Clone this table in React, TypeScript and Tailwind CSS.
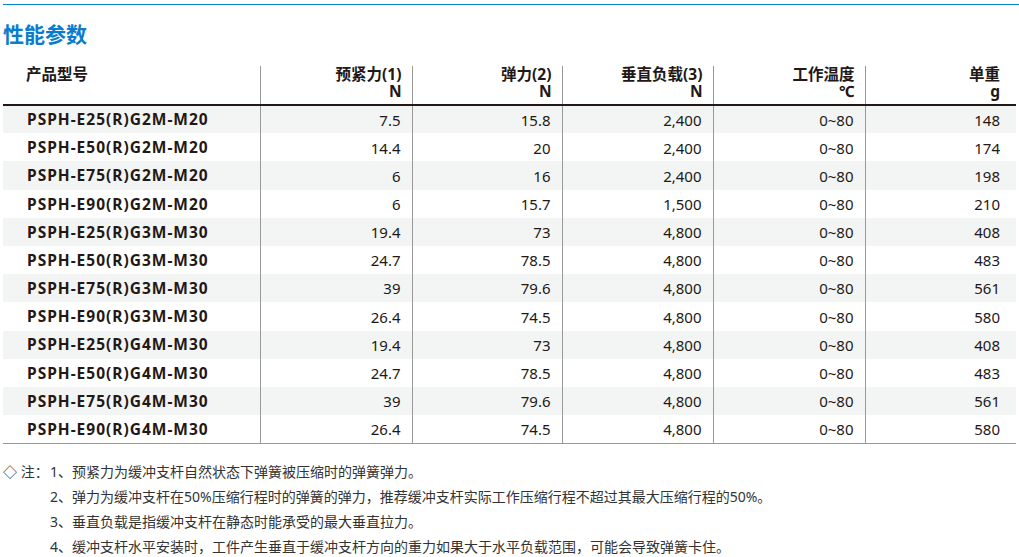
const rows: [string, string, string, string, string, string][] = [
  ["PSPH-E25(R)G2M-M20", "7.5", "15.8", "2,400", "0~80", "148"],
  ["PSPH-E50(R)G2M-M20", "14.4", "20", "2,400", "0~80", "174"],
  ["PSPH-E75(R)G2M-M20", "6", "16", "2,400", "0~80", "198"],
  ["PSPH-E90(R)G2M-M20", "6", "15.7", "1,500", "0~80", "210"],
  ["PSPH-E25(R)G3M-M30", "19.4", "73", "4,800", "0~80", "408"],
  ["PSPH-E50(R)G3M-M30", "24.7", "78.5", "4,800", "0~80", "483"],
  ["PSPH-E75(R)G3M-M30", "39", "79.6", "4,800", "0~80", "561"],
  ["PSPH-E90(R)G3M-M30", "26.4", "74.5", "4,800", "0~80", "580"],
  ["PSPH-E25(R)G4M-M30", "19.4", "73", "4,800", "0~80", "408"],
  ["PSPH-E50(R)G4M-M30", "24.7", "78.5", "4,800", "0~80", "483"],
  ["PSPH-E75(R)G4M-M30", "39", "79.6", "4,800", "0~80", "561"],
  ["PSPH-E90(R)G4M-M30", "26.4", "74.5", "4,800", "0~80", "580"],
]

const headers: [string, string][] = [
  ["预紧力(1)", "N"],
  ["弹力(2)", "N"],
  ["垂直负载(3)", "N"],
  ["工作温度", "℃"],
  ["单重", "g"],
]

const notes = [
  "1、预紧力为缓冲支杆自然状态下弹簧被压缩时的弹簧弹力。",
  "2、弹力为缓冲支杆在50%压缩行程时的弹簧的弹力，推荐缓冲支杆实际工作压缩行程不超过其最大压缩行程的50%。",
  "3、垂直负载是指缓冲支杆在静态时能承受的最大垂直拉力。",
  "4、缓冲支杆水平安装时，工件产生垂直于缓冲支杆方向的重力如果大于水平负载范围，可能会导致弹簧卡住。",
]

export default function App() {
  return (
    <div
      className="w-[1019px] h-[557px] bg-white text-[#231815] overflow-hidden"
      style={{ fontFamily: '"Noto Sans", "Noto Sans CJK SC", sans-serif' }}
    >
      <div className="pt-[4px] pl-[3px]">
        <div className="h-px bg-[#0a7ccd]" />
      </div>
      <h1 className="pl-[3px] mt-[16px] text-[21px] leading-[26px] font-bold text-[#0a7ccd]">性能参数</h1>

      <table className="ml-[3px] mt-[19px] w-[1013px] border-collapse table-fixed">
        <colgroup>
          <col className="w-[257px]" />
          <col className="w-[152px]" />
          <col className="w-[150px]" />
          <col className="w-[151px]" />
          <col className="w-[152px]" />
          <col />
        </colgroup>
        <thead>
          <tr className="h-[39px] border-b-2 border-[#231815]">
            <th className="align-top pl-[23px] text-left text-[15.5px] leading-[17px] font-bold border-r border-[#999]">
              产品型号
            </th>
            {headers.map(([a, b], i) => (
              <th
                key={a}
                className={`align-top text-right text-[15.5px] leading-[17px] font-bold ${
                  i < 4 ? "pr-[10px] border-r border-[#999]" : "pr-[16px]"
                }`}
              >
                <div>{a}</div>
                <div>{b}</div>
              </th>
            ))}
          </tr>
        </thead>
        <tbody>
          {rows.map((r, ri) => (
            <tr
              key={ri}
              className={`h-[28.2px] ${ri % 2 === 0 ? "bg-[#f3f4f4]" : "bg-white"} ${
                ri === rows.length - 1 ? "border-b border-[#999]" : ""
              }`}
            >
              <td className="pl-[24px] pt-[1px] text-[15.5px] font-bold tracking-[1px] border-r border-[#999]">{r[0]}</td>
              {r.slice(1).map((v, ci) => (
                <td
                  key={ci}
                  className={`pt-[1px] text-right text-[15px] ${
                    ci < 4 ? "pr-[11px] border-r border-[#999]" : "pr-[16px]"
                  }`}
                >
                  {v}
                </td>
              ))}
            </tr>
          ))}
        </tbody>
      </table>

      <div className="mt-[15px] pl-[3px] text-[14px] leading-[25px] text-[#333]">
        {notes.map((n, i) => (
          <div key={i} className="flex">
            <span className="w-[47px] shrink-0">{i === 0 ? "◇ 注：" : ""}</span>
            <span>{n}</span>
          </div>
        ))}
      </div>
    </div>
  )
}
